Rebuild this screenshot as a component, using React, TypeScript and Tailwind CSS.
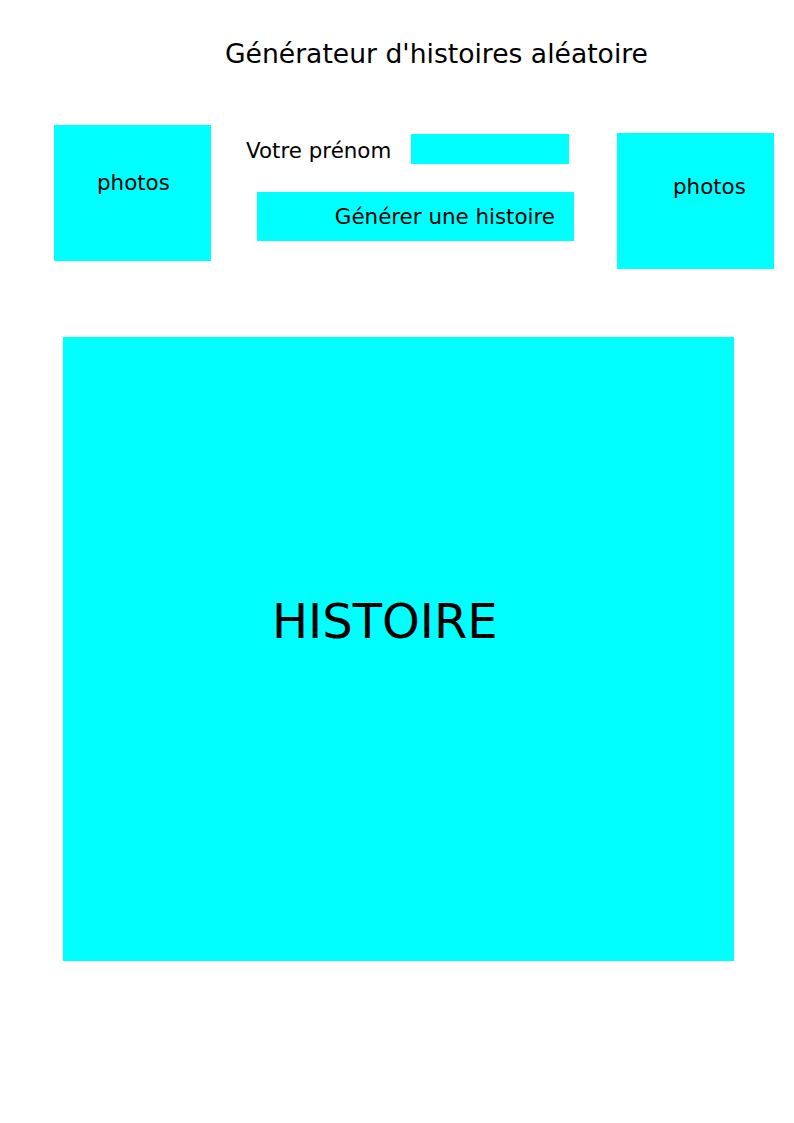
import React, { useState } from 'react';

const CYAN = 'bg-[#00ffff]';

const PhotoBox = ({ className }: { className: string }) => (
  <div className={`w-[157px] h-[136px] shrink-0 ${CYAN} text-[21.4px] leading-[24px] ${className}`}>
    photos
  </div>
);

export default function App() {
  const [name, setName] = useState('');

  return (
    <div className="w-[794px] min-h-[1123px] bg-white text-black font-['DejaVu_Sans',sans-serif]">
      {/* Title */}
      <h1 className="pt-[38px] pl-[225px] text-[26.6px] leading-[32px] font-normal">
        Générateur d'histoires aléatoire
      </h1>

      {/* Top row: photos / form / photos */}
      <div className="mt-[55px] flex items-start">
        <PhotoBox className="ml-[54px] pl-[43px] pt-[46px]" />

        <div className="ml-[35px] flex flex-col">
          <div className="mt-[9px] flex items-start">
            <label htmlFor="prenom" className="pt-[5px] text-[21.4px] leading-[24px] whitespace-nowrap">
              Votre prénom
            </label>
            <input
              id="prenom"
              value={name}
              onChange={(e) => setName(e.target.value)}
              className={`ml-[20px] w-[158px] h-[30px] ${CYAN} border-0 outline-none px-2`}
            />
          </div>
          <button
            className={`mt-[28px] ml-[11px] w-[317px] h-[49px] ${CYAN} flex items-center justify-end pr-[19px] text-[21.4px] leading-[24px]`}
          >
            Générer une histoire
          </button>
        </div>

        <PhotoBox className="ml-[43px] mt-[8px] pl-[56px] pt-[42px]" />
      </div>

      {/* Story area */}
      <div className={`mt-[68px] ml-[63px] w-[671px] h-[624px] ${CYAN} pl-[209px] pt-[256px] text-[48px] leading-[56px]`}>
        HISTOIRE
      </div>
    </div>
  );
}
